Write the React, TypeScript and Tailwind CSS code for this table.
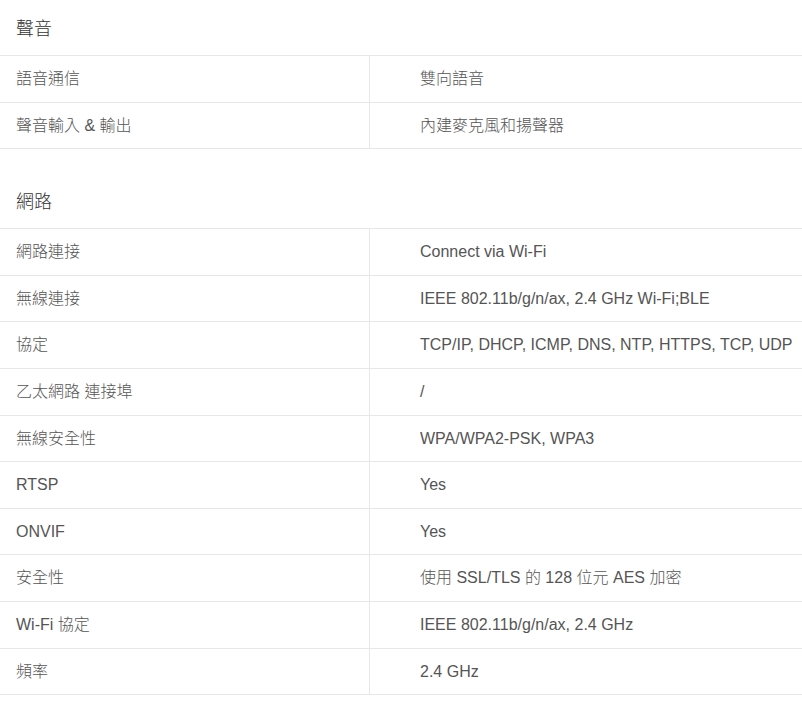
import React from 'react';

type Row = [string, string];

const sections: { title: string; rows: Row[] }[] = [
    {
        title: '聲音',
        rows: [
            ['語音通信', '雙向語音'],
            ['聲音輸入 & 輸出', '內建麥克風和揚聲器'],
        ],
    },
    {
        title: '網路',
        rows: [
            ['網路連接', 'Connect via Wi-Fi'],
            ['無線連接', 'IEEE 802.11b/g/n/ax, 2.4 GHz Wi-Fi;BLE'],
            ['協定', 'TCP/IP, DHCP, ICMP, DNS, NTP, HTTPS, TCP, UDP'],
            ['乙太網路 連接埠', '/'],
            ['無線安全性', 'WPA/WPA2-PSK, WPA3'],
            ['RTSP', 'Yes'],
            ['ONVIF', 'Yes'],
            ['安全性', '使用 SSL/TLS 的 128 位元 AES 加密'],
            ['Wi-Fi 協定', 'IEEE 802.11b/g/n/ax, 2.4 GHz'],
            ['頻率', '2.4 GHz'],
        ],
    },
];

const App: React.FC = () => {
    return (
        <div className="w-[802px] min-h-[721px] bg-white font-light font-['Liberation_Sans','Noto_Sans_CJK_TC',sans-serif]">
            {sections.map((section, i) => (
                <div key={section.title} className={i > 0 ? 'mt-6' : ''}>
                    {/* Section title */}
                    <div className="px-4 pt-[18px] pb-[14px] text-[18px] leading-[23px] text-[#333]">{section.title}</div>

                    {/* Spec rows */}
                    <div className="border-t border-[#e6e6eb]">
                        {section.rows.map(([label, value]) => (
                            <div key={label} className="flex border-b border-[#e6e6eb] text-[16px] leading-[21.6px] text-[#555]">
                                <div className="w-[370px] shrink-0 border-r border-[#e6e6eb] pl-4 py-3">{label}</div>
                                <div className="flex-1 pl-[50px] py-3 whitespace-nowrap">{value}</div>
                            </div>
                        ))}
                    </div>
                </div>
            ))}
        </div>
    );
};

export default App;
